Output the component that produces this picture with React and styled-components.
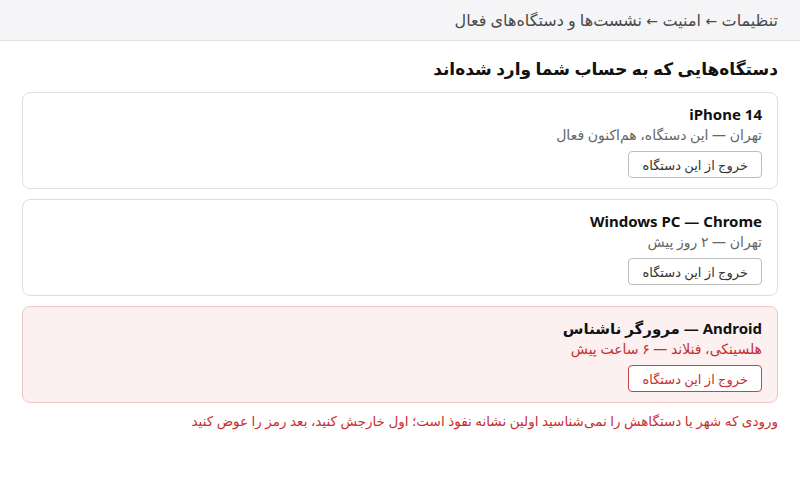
import styled, { createGlobalStyle } from 'styled-components';

const GlobalStyle = createGlobalStyle`
  html, body {
    margin: 0;
    padding: 0;
    background: #fff;
  }
  body {
    font-family: "Noto Sans", "DejaVu Sans", sans-serif;
    color: #222;
  }
`;

const crumbs = ['تنظیمات', 'امنیت', 'نشست‌ها و دستگاه‌های فعال'];

const sessions = [
  {
    id: 'iphone',
    name: 'iPhone 14',
    meta: 'تهران — این دستگاه، هم‌اکنون فعال',
  },
  {
    id: 'windows',
    name: 'Windows PC — Chrome',
    meta: 'تهران — ۲ روز پیش',
  },
  {
    id: 'android',
    name: 'Android — مرورگر ناشناس',
    meta: 'هلسینکی، فنلاند — ۶ ساعت پیش',
    suspicious: true,
  },
];

export default function App() {
  return (
    <Page dir="rtl">
      <GlobalStyle />
      <Breadcrumb>
        {crumbs.map((c, i) => (
          <span key={c}>
            {i > 0 && <Arrow> ← </Arrow>}
            {c}
          </span>
        ))}
      </Breadcrumb>
      <Main>
        <Heading>دستگاه‌هایی که به حساب شما وارد شده‌اند</Heading>
        <List>
          {sessions.map((s) => (
            <Card key={s.id} $danger={s.suspicious}>
              <DeviceName>{s.name}</DeviceName>
              <Meta $danger={s.suspicious}>{s.meta}</Meta>
              <SignOut type="button" $danger={s.suspicious}>
                خروج از این دستگاه
              </SignOut>
            </Card>
          ))}
        </List>
        <Warning>
          ورودی که شهر یا دستگاهش را نمی‌شناسید اولین نشانه نفوذ است؛ اول خارجش کنید، بعد رمز را عوض کنید
        </Warning>
      </Main>
    </Page>
  );
}

const Page = styled.div`
  width: 800px;
  min-height: 480px;
  direction: rtl;
`;

const Breadcrumb = styled.header`
  height: 41px;
  box-sizing: border-box;
  display: flex;
  align-items: center;
  padding: 0 22px;
  background: #f5f5f7;
  border-bottom: 1px solid #e0e0e3;
  font-size: 16px;
  color: #4a4a4a;
  white-space: pre;
`;

const Arrow = styled.span`
  font-family: "DejaVu Sans", sans-serif;
  font-size: 14px;
`;

const Main = styled.main`
  padding: 16px 22px 0;
`;

const Heading = styled.h1`
  margin: 0 0 11px;
  font-size: 17px;
  line-height: 24px;
  font-weight: bold;
  color: #111;
`;

const List = styled.div`
  display: flex;
  flex-direction: column;
  gap: 10px;
`;

const Card = styled.section`
  display: flex;
  flex-direction: column;
  align-items: flex-start;
  padding: 11px 15px 10px;
  border: 1px solid ${(p) => (p.$danger ? '#f0c4c4' : '#dedede')};
  border-radius: 8px;
  background: ${(p) => (p.$danger ? '#fcf0f0' : '#fff')};
`;

const DeviceName = styled.div`
  font-size: 15px;
  line-height: 20px;
  font-weight: bold;
  color: #111;
`;

const Meta = styled.div`
  margin-top: 2px;
  font-size: 14px;
  line-height: 18px;
  color: ${(p) => (p.$danger ? '#c62f2f' : '#666')};
`;

const SignOut = styled.button`
  margin-top: 7px;
  height: 27px;
  padding: 0 13px;
  font-family: inherit;
  font-size: 13px;
  color: ${(p) => (p.$danger ? '#c62f2f' : '#333')};
  background: #fff;
  border: 1px solid ${(p) => (p.$danger ? '#c84444' : '#bdbdbd')};
  border-radius: 4px;
  cursor: pointer;
`;

const Warning = styled.p`
  margin: 9px 0 0;
  font-size: 13.5px;
  line-height: 18px;
  color: #c62f2f;
`;
